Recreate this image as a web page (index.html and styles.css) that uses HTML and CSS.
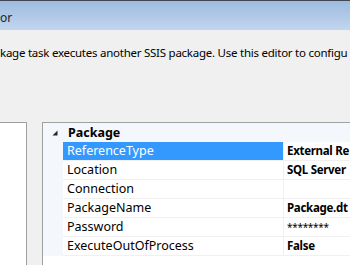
FILE: index.html
```html
<!DOCTYPE html>
<html lang="en">
<head>
    <meta charset="UTF-8">
    <title>Execute Package Task Editor</title>
    <link rel="stylesheet" href="styles.css">
</head>
<body>
    <div class="titlebar">
        <span class="title">or</span>
    </div>
    <div class="desc">kage task executes another SSIS package. Use this editor to configu</div>

    <div class="panes">
        <div class="left-pane"></div>
        <div class="grid">
            <div class="row category">
                <div class="gutter">
                    <svg width="6" height="6" viewBox="0 0 6 6"><polygon points="5.5,0.5 5.5,5.5 0.5,5.5" fill="#262626"/></svg>
                </div>
                <div class="cat-name">Package</div>
            </div>
            <div class="row selected">
                <div class="gutter"></div>
                <div class="name">ReferenceType</div>
                <div class="value">External Re</div>
            </div>
            <div class="row">
                <div class="gutter"></div>
                <div class="name">Location</div>
                <div class="value">SQL Server</div>
            </div>
            <div class="row">
                <div class="gutter"></div>
                <div class="name">Connection</div>
                <div class="value"></div>
            </div>
            <div class="row">
                <div class="gutter"></div>
                <div class="name">PackageName</div>
                <div class="value">Package.dt</div>
            </div>
            <div class="row">
                <div class="gutter"></div>
                <div class="name">Password</div>
                <div class="value pwd">********</div>
            </div>
            <div class="row">
                <div class="gutter"></div>
                <div class="name">ExecuteOutOfProcess</div>
                <div class="value">False</div>
            </div>
        </div>
    </div>
</body>
</html>
```

FILE: styles.css
```css
* {
    margin: 0;
    padding: 0;
    box-sizing: border-box;
}

body {
    background-color: #f0f0f0;
    font-family: "Noto Sans", "Open Sans", sans-serif;
    font-size: 12px;
    color: #000;
    width: 350px;
    height: 265px;
    overflow: hidden;
}

.titlebar {
    height: 30px;
    border-top: 1px solid #404850;
    background: linear-gradient(to bottom, #9dbbe0, #b4cbe8 60%, #c2d6ee);
    white-space: nowrap;
}

.title {
    display: block;
    padding-top: 8px;
    font-size: 12px;
    color: #1e1e1e;
}

.desc {
    padding-top: 15px;
    height: 92px;
    white-space: nowrap;
    overflow: hidden;
    font-size: 11.5px;
    letter-spacing: -0.25px;
}

.panes {
    display: flex;
    height: 143px;
}

.left-pane {
    flex: 0 0 27px;
    background-color: #fff;
    border-top: 1px solid #a0a0a0;
    border-right: 1px solid #a0a0a0;
}

.grid {
    margin-left: 15px;
    flex: 1;
    min-width: 0;
    background-color: #fff;
    border-top: 1px solid #a0a0a0;
    border-left: 1px solid #a0a0a0;
    font-size: 12.5px;
}

.row {
    display: flex;
    height: 19px;
}

.gutter {
    flex: 0 0 20px;
    background-color: #f4f7fc;
    display: flex;
    align-items: center;
    justify-content: flex-end;
    padding-right: 5px;
}

.category {
    background-color: #f4f7fc;
}

.cat-name {
    font-weight: bold;
    line-height: 19px;
    padding-left: 5px;
}

.name {
    flex: 0 0 221px;
    padding-left: 4px;
    line-height: 18px;
    border-bottom: 1px solid #f0f0f0;
    border-right: 1px solid #f0f0f0;
    white-space: nowrap;
    overflow: hidden;
}

.value {
    flex: 1;
    min-width: 0;
    padding-left: 3px;
    line-height: 18px;
    font-weight: bold;
    font-size: 11.5px;
    letter-spacing: -0.3px;
    border-bottom: 1px solid #f0f0f0;
    white-space: nowrap;
    overflow: hidden;
}

.pwd {
    font-weight: normal;
    font-size: 10px;
}

.selected .name {
    background-color: #3399ff;
    color: #fff;
}
```
